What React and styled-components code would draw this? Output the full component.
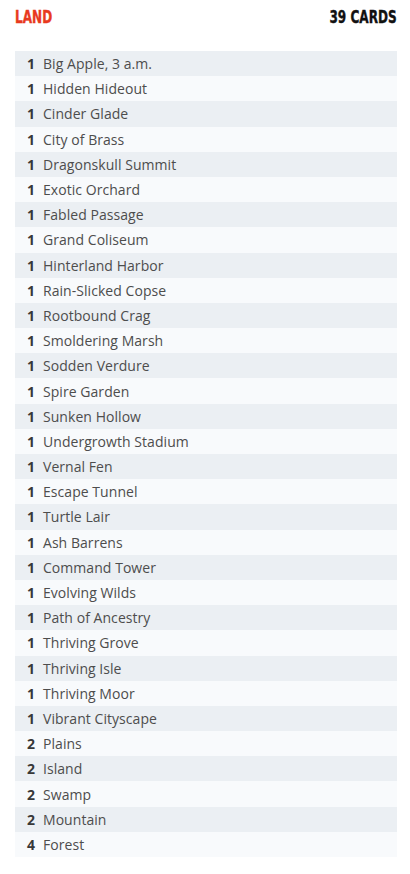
import React from "react";
import styled, { createGlobalStyle } from "styled-components";

const cards = [
  [1, "Big Apple, 3 a.m."],
  [1, "Hidden Hideout"],
  [1, "Cinder Glade"],
  [1, "City of Brass"],
  [1, "Dragonskull Summit"],
  [1, "Exotic Orchard"],
  [1, "Fabled Passage"],
  [1, "Grand Coliseum"],
  [1, "Hinterland Harbor"],
  [1, "Rain-Slicked Copse"],
  [1, "Rootbound Crag"],
  [1, "Smoldering Marsh"],
  [1, "Sodden Verdure"],
  [1, "Spire Garden"],
  [1, "Sunken Hollow"],
  [1, "Undergrowth Stadium"],
  [1, "Vernal Fen"],
  [1, "Escape Tunnel"],
  [1, "Turtle Lair"],
  [1, "Ash Barrens"],
  [1, "Command Tower"],
  [1, "Evolving Wilds"],
  [1, "Path of Ancestry"],
  [1, "Thriving Grove"],
  [1, "Thriving Isle"],
  [1, "Thriving Moor"],
  [1, "Vibrant Cityscape"],
  [2, "Plains"],
  [2, "Island"],
  [2, "Swamp"],
  [2, "Mountain"],
  [4, "Forest"],
];

export default function App() {
  return (
    <>
      <GlobalStyle />
      <Section>
        <Header>
          <Heading $color="#e8391e" $origin="left">Land</Heading>
          <Heading $color="#111111" $origin="right">39 Cards</Heading>
        </Header>
        <List>
          {cards.map(([qty, name], i) => (
            <Row key={name} $odd={i % 2 === 0}>
              <Qty>{qty}</Qty>
              <Name>{name}</Name>
            </Row>
          ))}
        </List>
      </Section>
    </>
  );
}

const GlobalStyle = createGlobalStyle`
  body {
    margin: 0;
    background: #ffffff;
    font-family: "Open Sans", sans-serif;
  }
`;

const Section = styled.div`
  padding: 0 13px 0 15px;
`;

const Header = styled.div`
  display: flex;
  justify-content: space-between;
  align-items: center;
  height: 34px;
  margin-bottom: 17px;
`;

/* condensed display face: no narrow font is installed, so squeeze a bold one */
const Heading = styled.span`
  display: inline-block;
  font-family: "DejaVu Sans", sans-serif;
  font-weight: 700;
  font-size: 17px;
  text-transform: uppercase;
  color: ${(p) => p.$color};
  -webkit-text-stroke: 0.4px currentColor;
  transform: scaleX(0.71);
  transform-origin: ${(p) => p.$origin} center;
`;

const List = styled.div`
  display: flex;
  flex-direction: column;
`;

const Row = styled.div`
  display: grid;
  grid-template-columns: 20px 1fr;
  column-gap: 8px;
  height: 25.2px;
  align-items: center;
  background: ${(p) => (p.$odd ? "#ebeff3" : "#f8fafc")};
  font-size: 14px;
`;

const Qty = styled.span`
  text-align: right;
  font-weight: 700;
  color: #383838;
`;

const Name = styled.span`
  color: #4d4d4d;
  letter-spacing: 0.05px;
`;
